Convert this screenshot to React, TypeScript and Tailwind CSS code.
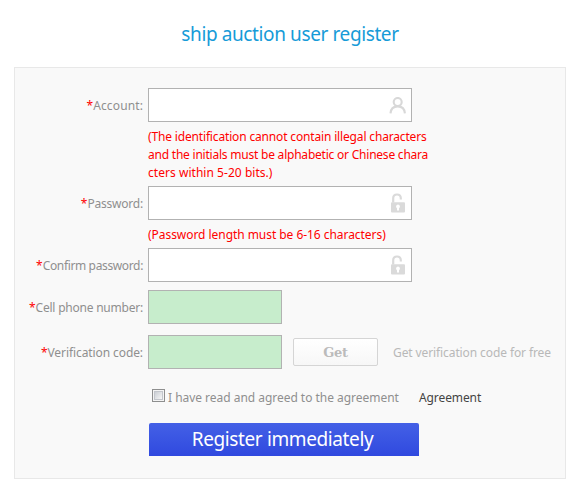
import type { ReactNode } from "react";

interface FieldProps {
  label: string;
  labelClass?: string;
  children: ReactNode;
}

function Field({ label, labelClass = "", children }: FieldProps) {
  return (
    <div className="flex h-[34px] items-center">
      <label className="mr-[5px] w-[128px] shrink-0 whitespace-nowrap pt-[2px] text-right text-[#8f8f8f]">
        <span className="text-[#f00]">*</span>
        <span className={labelClass}>{label}</span>
      </label>
      {children}
    </div>
  );
}

function InputBox({ icon }: { icon: ReactNode }) {
  return (
    <div className="flex h-[34px] w-[264px] items-center justify-end border border-[#b2b2b2] bg-white pr-[5px]">
      <input className="h-full min-w-0 flex-1 bg-transparent px-2 outline-none" />
      {icon}
    </div>
  );
}

function UserIcon() {
  return (
    <svg width="17" height="17" viewBox="0 0 17 17" fill="none" stroke="#d8d8d8" strokeWidth="2.1" className="shrink-0">
      <ellipse cx="8.7" cy="5" rx="4" ry="4" />
      <path d="M1.5 16.4C1.8 12 4.4 9.4 8.7 9.4s6.9 2.6 7.2 7" />
    </svg>
  );
}

function LockIcon() {
  return (
    <svg width="17" height="20" viewBox="0 0 17 20" fill="none" className="shrink-0">
      <path d="M4.2 9.5V5.2C4.2 2.6 5.6 1.5 8 1.5s3.8 1.3 3.8 3.8v1.2" stroke="#dadada" strokeWidth="2.2" />
      <rect x="2" y="9.3" width="14" height="10.3" rx="1" fill="#dadada" />
      <path d="M9 11.5a2 2 0 0 1 1 3.7v2.4H8v-2.4a2 2 0 0 1 1-3.7z" fill="#fff" />
    </svg>
  );
}

export default function App() {
  return (
    <div className="h-[489px] w-[571px] overflow-hidden bg-white font-['Noto_Sans',sans-serif] text-[12px] leading-[18px]">
      <h1 className="ml-[14px] flex h-[67px] w-[552px] items-center justify-center pt-px text-[19px] text-[#169bd8]">
        <span className="tracking-[-0.39px]">ship auction user register</span>
      </h1>
      <form className="ml-[14px] h-[412px] w-[552px] border border-[#e8e8e8] bg-[#f9f9f9] pt-5">
        <Field label="Account:" labelClass="tracking-[0.12px]">
          <InputBox icon={<UserIcon />} />
        </Field>
        <p className="ml-[133px] mt-[6px] mb-[4px] whitespace-nowrap text-[#f00]">
          <span className="tracking-[-0.16px]">(The identification cannot contain illegal characters</span>
          <br />
          <span className="tracking-[-0.22px]">and the initials must be alphabetic or Chinese chara</span>
          <br />
          <span className="tracking-[0.04px]">cters within 5-20 bits.)</span>
        </p>
        <Field label="Password:" labelClass="tracking-[-0.22px]">
          <InputBox icon={<LockIcon />} />
        </Field>
        <p className="ml-[133px] mt-[6px] mb-[4px] whitespace-nowrap text-[#f00]">
          <span className="tracking-[-0.05px]">(Password length must be 6-16 characters)</span>
        </p>
        <Field label="Confirm password:" labelClass="tracking-[-0.36px]">
          <InputBox icon={<LockIcon />} />
        </Field>
        <div className="mt-2">
          <Field label="Cell phone number:" labelClass="tracking-[-0.22px]">
            <input className="h-[34px] w-[134px] border border-[#b2b2b2] bg-[#c7edcc] px-2 outline-none" />
          </Field>
        </div>
        <div className="mt-[11px]">
          <Field label="Verification code:" labelClass="tracking-[-0.09px]">
            <input className="h-[34px] w-[134px] border border-[#b2b2b2] bg-[#c7edcc] px-2 outline-none" />
            <button
              type="button"
              className="ml-[11px] flex h-[28px] w-[85px] items-center justify-center rounded-[2px] border border-[#d5d5d5] bg-linear-to-b from-white to-[#f7f7f7] pt-px font-['DejaVu_Serif',serif] text-[13px] font-bold text-[#bbb]"
            >
              <span className="tracking-[-0.3px]">Get</span>
            </button>
            <span className="ml-[15px] whitespace-nowrap pt-[2px] tracking-[-0.1px] text-[#b8b8b8]">
              Get verification code for free
            </span>
          </Field>
        </div>
        <div className="ml-[137px] mt-[17px] flex h-[22px] items-center whitespace-nowrap text-[#8f8f8f]">
          <span className="mb-1 size-[13px] shrink-0 border border-[#8e8f8f] bg-[#f4f4f4] p-px">
            <span className="block size-[9px] border border-[#c3c6cc] bg-linear-to-br from-[#cbcfd5] to-[#f6f6f6]" />
          </span>
          <span className="ml-[3px] w-[251px] pt-[2px] tracking-[-0.03px]">I have read and agreed to the agreement</span>
          <a className="pt-[2px] tracking-[-0.1px] text-[#444]">Agreement</a>
        </div>
        <button
          type="button"
          className="ml-[134px] mt-[15px] flex h-[33px] w-[270px] items-center justify-center rounded-t-[2px] bg-linear-to-b from-[#4460e6] to-[#3049df] pb-[2px] pr-[3px] text-[19px] text-white"
        >
          <span className="tracking-[-0.38px]">Register immediately</span>
        </button>
      </form>
    </div>
  );
}
